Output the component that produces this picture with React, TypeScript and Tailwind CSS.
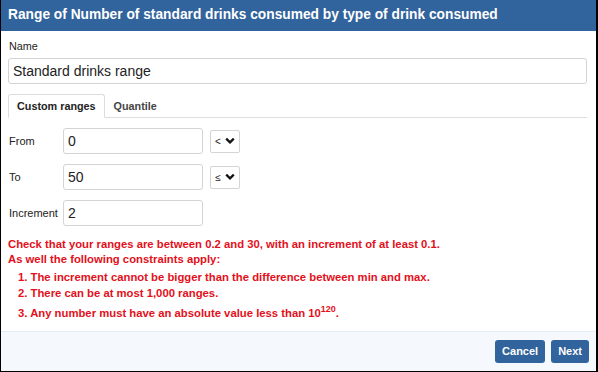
import { useState } from "react";

const ROWS = [
  { label: "From", value: "0", op: "<" },
  { label: "To", value: "50", op: "≤" },
  { label: "Increment", value: "2", op: null },
];

function Chevron() {
  return (
    <svg width="10" height="8" viewBox="0 0 10 8" className="ml-[4px]">
      <path d="M1.2 1.6 L5 5.4 L8.8 1.6" fill="none" stroke="#111" strokeWidth="2.2" />
    </svg>
  );
}

export default function App() {
  const [tab, setTab] = useState("custom");

  return (
    <div
      className="w-[598px] h-[372px] bg-white flex flex-col border-l border-r-2 border-b border-black text-[#333]"
      style={{ fontFamily: '"Liberation Sans", Arial, sans-serif' }}
    >
      {/* Header */}
      <div className="h-[31px] shrink-0 bg-[#31639c] flex items-center pl-[7px]">
        <h1 className="text-white font-bold text-[13.75px]">
          Range of Number of standard drinks consumed by type of drink consumed
        </h1>
      </div>

      {/* Body */}
      <div className="flex-1 pl-[7px] pr-[9px] pt-[8px]">
        <div className="text-[10.8px] leading-[14px] h-[14px] pl-px text-[#222]">Name</div>
        <input
          readOnly
          value="Standard drinks range"
          className="mt-[5px] w-full h-[26px] border border-[#d4d4d4] rounded-[3px] px-[4px] text-[14px] text-[#222] outline-none"
        />

        {/* Tabs */}
        <div className="mt-[10px] flex h-[24px] border-b border-[#ddd]">
          {[
            { key: "custom", label: "Custom ranges" },
            { key: "quantile", label: "Quantile" },
          ].map((t) => (
            <button
              key={t.key}
              onClick={() => setTab(t.key)}
              className={`px-[8px] text-[10.8px] font-bold -mb-px rounded-t-[3px] ${
                tab === t.key
                  ? "border border-[#ddd] border-b-white bg-white text-[#222]"
                  : "border border-transparent text-[#444]"
              }`}
            >
              {t.label}
            </button>
          ))}
        </div>

        {/* Range rows */}
        <div className="mt-[10px] flex flex-col gap-[10px]">
          {ROWS.map((r) => (
            <div key={r.label} className="flex items-center h-[26px]">
              <span className="w-[55px] pl-px text-[11px] text-[#222]">{r.label}</span>
              <input
                readOnly
                value={r.value}
                className="w-[140px] h-[26px] border border-[#d4d4d4] rounded-[3px] px-[4px] text-[14px] text-[#222] outline-none"
              />
              {r.op && (
                <div className="ml-[7px] w-[30px] h-[23px] border border-[#d4d4d4] rounded-[2px] flex items-center justify-center text-[10px] text-[#222]">
                  {r.op}
                  <Chevron />
                </div>
              )}
            </div>
          ))}
        </div>

        {/* Constraints */}
        <div className="mt-[11px] text-[#e3101b] font-bold text-[11.3px] leading-[15px]">
          <p>Check that your ranges are between 0.2 and 30, with an increment of at least 0.1.</p>
          <p>As well the following constraints apply:</p>
          <ol className="pl-[10px] mt-[2px] leading-[16px]">
            <li>1. The increment cannot be bigger than the difference between min and max.</li>
            <li>2. There can be at most 1,000 ranges.</li>
            <li className="mt-[4px]">
              3. Any number must have an absolute value less than 10
              <sup className="text-[9px] relative -top-[5px]">120</sup>.
            </li>
          </ol>
        </div>
      </div>

      {/* Footer */}
      <div className="h-[40px] shrink-0 bg-[#f5f8fc] border-t border-[#e6ecf3] flex items-center justify-end gap-[6px] pr-[7px]">
        <button className="h-[23px] px-[7px] rounded-[3px] bg-[#31639c] text-white font-bold text-[11px]">
          Cancel
        </button>
        <button className="h-[23px] px-[7px] rounded-[3px] bg-[#31639c] text-white font-bold text-[11px]">
          Next
        </button>
      </div>
    </div>
  );
}
